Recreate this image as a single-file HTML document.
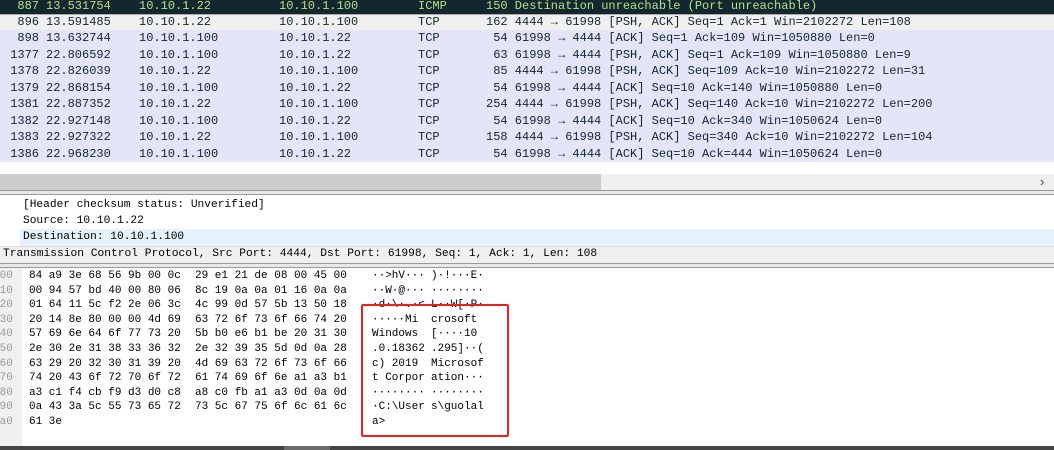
<!DOCTYPE html>
<html><head><meta charset="utf-8"><style>
body{margin:0;width:1054px;height:450px;overflow:hidden;background:#fff;position:relative;font-family:"Liberation Mono",monospace;}
.r{position:absolute;left:0;width:1054px;height:16px;font-size:12px;line-height:16px;white-space:pre;color:#12272e;}
.r span{position:absolute;top:0}
.d{position:absolute;font-size:11.2px;line-height:16px;white-space:pre;color:#000}
.h{position:absolute;font-size:11px;line-height:14.6px;white-space:pre;color:#000}
</style></head><body>
<div class="r" style="top:-2px;height:16px;background:#12272e;color:#b5e08a"><span style="right:1015px">887</span><span style="left:46px">13.531754</span><span style="left:139px">10.10.1.22</span><span style="left:279px">10.10.1.100</span><span style="left:418px">ICMP</span><span style="left:486px">150 Destination unreachable (Port unreachable)</span></div>
<div class="r" style="top:14px;background:#f0f0f0;border-top:1px solid #aaa;border-bottom:1px solid #aaa;height:15px;line-height:15px"><span style="right:1015px">896</span><span style="left:46px">13.591485</span><span style="left:139px">10.10.1.22</span><span style="left:279px">10.10.1.100</span><span style="left:418px">TCP</span><span style="left:486px">162 4444 → 61998 [PSH, ACK] Seq=1 Ack=1 Win=2102272 Len=108</span></div>
<div style="position:absolute;top:30px;left:0;width:1054px;height:132px;background:#e4e4fa"></div>
<div class="r" style="top:30px"><span style="right:1015px">898</span><span style="left:46px">13.632744</span><span style="left:139px">10.10.1.100</span><span style="left:279px">10.10.1.22</span><span style="left:418px">TCP</span><span style="left:486px"> 54 61998 → 4444 [ACK] Seq=1 Ack=109 Win=1050880 Len=0</span></div>
<div class="r" style="top:46.5px"><span style="right:1015px">1377</span><span style="left:46px">22.806592</span><span style="left:139px">10.10.1.100</span><span style="left:279px">10.10.1.22</span><span style="left:418px">TCP</span><span style="left:486px"> 63 61998 → 4444 [PSH, ACK] Seq=1 Ack=109 Win=1050880 Len=9</span></div>
<div class="r" style="top:63px"><span style="right:1015px">1378</span><span style="left:46px">22.826039</span><span style="left:139px">10.10.1.22</span><span style="left:279px">10.10.1.100</span><span style="left:418px">TCP</span><span style="left:486px"> 85 4444 → 61998 [PSH, ACK] Seq=109 Ack=10 Win=2102272 Len=31</span></div>
<div class="r" style="top:79.5px"><span style="right:1015px">1379</span><span style="left:46px">22.868154</span><span style="left:139px">10.10.1.100</span><span style="left:279px">10.10.1.22</span><span style="left:418px">TCP</span><span style="left:486px"> 54 61998 → 4444 [ACK] Seq=10 Ack=140 Win=1050880 Len=0</span></div>
<div class="r" style="top:96px"><span style="right:1015px">1381</span><span style="left:46px">22.887352</span><span style="left:139px">10.10.1.22</span><span style="left:279px">10.10.1.100</span><span style="left:418px">TCP</span><span style="left:486px">254 4444 → 61998 [PSH, ACK] Seq=140 Ack=10 Win=2102272 Len=200</span></div>
<div class="r" style="top:112.5px"><span style="right:1015px">1382</span><span style="left:46px">22.927148</span><span style="left:139px">10.10.1.100</span><span style="left:279px">10.10.1.22</span><span style="left:418px">TCP</span><span style="left:486px"> 54 61998 → 4444 [ACK] Seq=10 Ack=340 Win=1050624 Len=0</span></div>
<div class="r" style="top:129px"><span style="right:1015px">1383</span><span style="left:46px">22.927322</span><span style="left:139px">10.10.1.22</span><span style="left:279px">10.10.1.100</span><span style="left:418px">TCP</span><span style="left:486px">158 4444 → 61998 [PSH, ACK] Seq=340 Ack=10 Win=2102272 Len=104</span></div>
<div class="r" style="top:145.5px"><span style="right:1015px">1386</span><span style="left:46px">22.968230</span><span style="left:139px">10.10.1.100</span><span style="left:279px">10.10.1.22</span><span style="left:418px">TCP</span><span style="left:486px"> 54 61998 → 4444 [ACK] Seq=10 Ack=444 Win=1050624 Len=0</span></div>
<div style="position:absolute;top:174px;left:0;width:1054px;height:16px;background:#f0f0f0"></div>
<div style="position:absolute;top:174px;left:0;width:601px;height:16px;background:#cdcdcd"></div>
<div style="position:absolute;top:174px;left:1040px;font:13px 'Liberation Sans',sans-serif;color:#444;line-height:16px">›</div>
<div style="position:absolute;top:190px;left:0;width:1054px;height:5px;background:#e8e8e8;border-top:1px solid #999;border-bottom:1px solid #999;box-sizing:border-box"></div>
<div class="d" style="top:197px;left:23px">[Header checksum status: Unverified]</div>
<div class="d" style="top:213px;left:23px">Source: 10.10.1.22</div>
<div style="position:absolute;top:229px;left:20px;width:1034px;height:17px;background:#e5f1fb"></div>
<div class="d" style="top:229px;left:23px">Destination: 10.10.1.100</div>
<div style="position:absolute;top:246px;left:0;width:1054px;height:16px;background:#f0f0f0;border-top:1px solid #ddd"></div>
<div class="d" style="top:246px;left:3px;font-size:11.25px">Transmission Control Protocol, Src Port: 4444, Dst Port: 61998, Seq: 1, Ack: 1, Len: 108</div>
<div style="position:absolute;top:263px;left:0;width:1054px;height:3px;background:#e8e8e8;border-top:1px solid #999;border-bottom:1px solid #999"></div>
<div style="position:absolute;top:268px;left:0;width:22px;height:178px;background:#f0f0f0"></div>
<div class="h" style="top:269px;left:-7px;color:#999">000
010
020
030
040
050
060
070
080
090
0a0</div>
<div class="h" style="top:269px;left:29px">84 a9 3e 68 56 9b 00 0c
00 94 57 bd 40 00 80 06
01 64 11 5c f2 2e 06 3c
20 14 8e 80 00 00 4d 69
57 69 6e 64 6f 77 73 20
2e 30 2e 31 38 33 36 32
63 29 20 32 30 31 39 20
74 20 43 6f 72 70 6f 72
a3 c1 f4 cb f9 d3 d0 c8
0a 43 3a 5c 55 73 65 72
61 3e</div>
<div class="h" style="top:269px;left:195px">29 e1 21 de 08 00 45 00
8c 19 0a 0a 01 16 0a 0a
4c 99 0d 57 5b 13 50 18
63 72 6f 73 6f 66 74 20
5b b0 e6 b1 be 20 31 30
2e 32 39 35 5d 0d 0a 28
4d 69 63 72 6f 73 6f 66
61 74 69 6f 6e a1 a3 b1
a8 c0 fb a1 a3 0d 0a 0d
73 5c 67 75 6f 6c 61 6c</div>
<div class="h" style="top:269px;left:372px">··>hV···
··W·@···
·d·\·.·&lt;
·····Mi
Windows
.0.18362
c) 2019
t Corpor
········
·C:\User
a&gt;</div>
<div class="h" style="top:269px;left:431px">)·!···E·
········
L··W[·P·
crosoft
[····10
.295]··(
Microsof
ation···
········
s\guolal</div>
<div style="position:absolute;left:361px;top:304px;width:148px;height:133px;border:2px solid #e8231f;border-radius:2px;box-sizing:border-box"></div>
<div style="position:absolute;top:446px;left:0;width:1054px;height:4px;background:#444"></div>
<div style="position:absolute;top:446px;left:284px;width:46px;height:4px;background:#6a6a6a"></div>
</body></html>
